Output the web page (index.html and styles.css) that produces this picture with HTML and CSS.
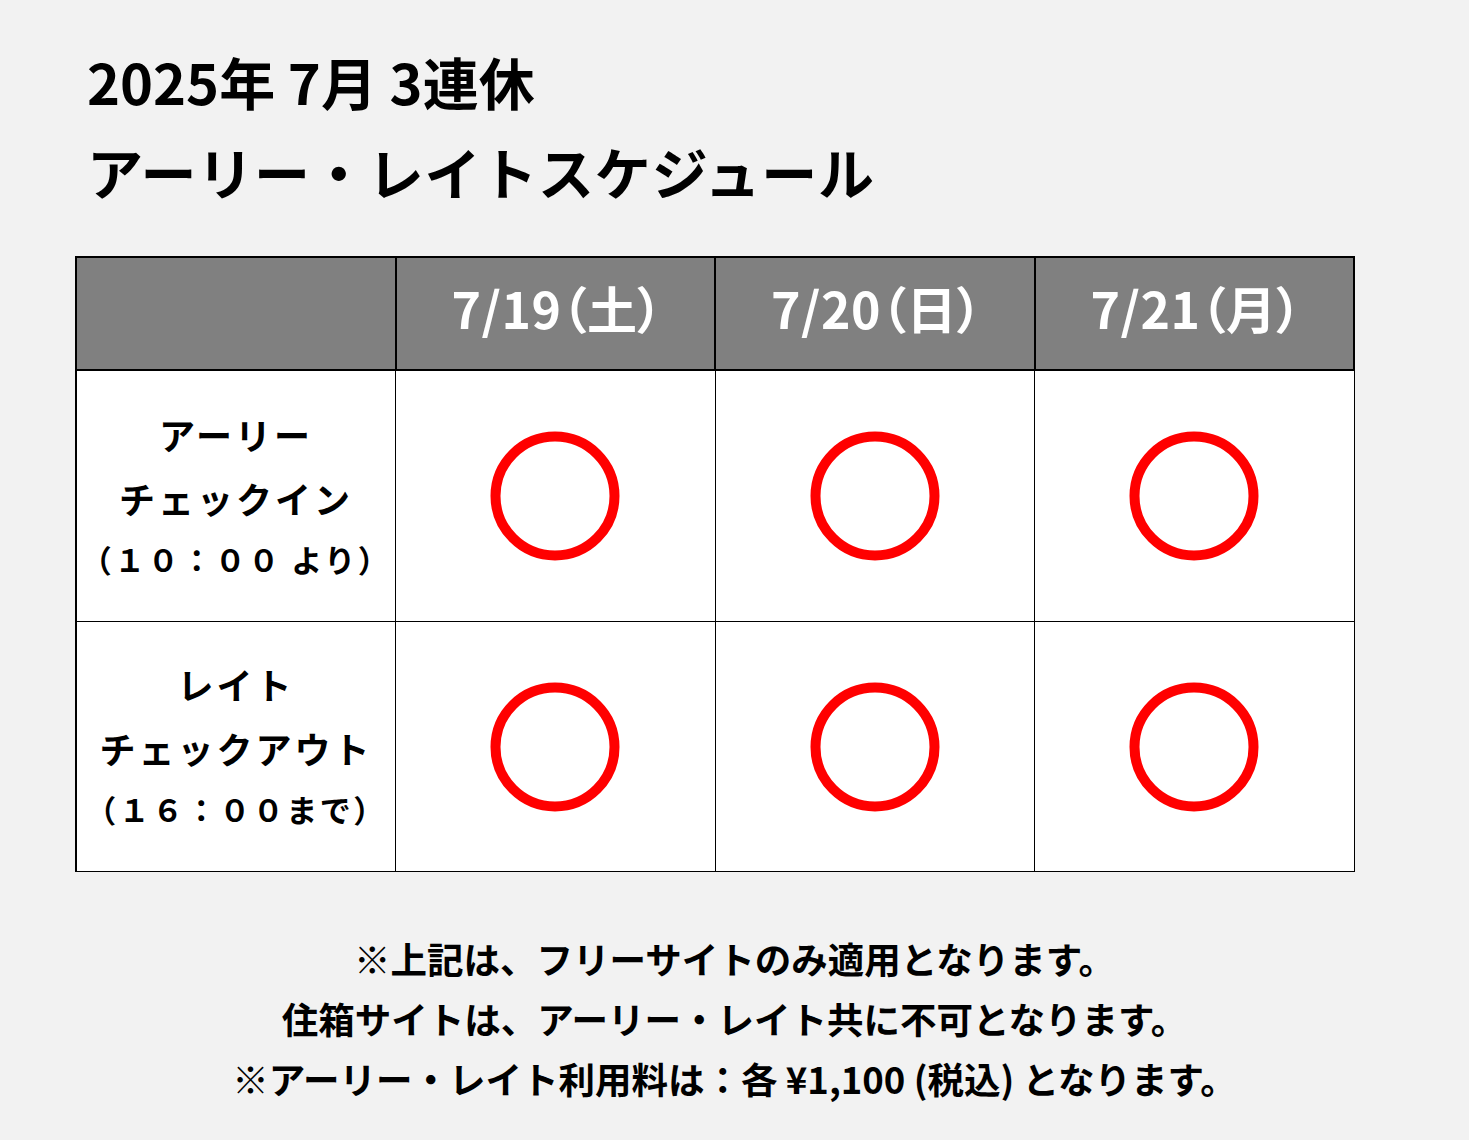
FILE: index.html
```html
<!DOCTYPE html>
<html lang="ja">
<head>
<meta charset="utf-8">
<title>2025年 7月 3連休 アーリー・レイトスケジュール</title>
<link rel="stylesheet" href="styles.css">
</head>
<body>
<div class="page">
  <h1 class="title">
    <span class="title-line1">2025年 7月 3連休</span>
    <span class="title-line2">アーリー・レイトスケジュール</span>
  </h1>

  <table class="schedule">
    <thead>
      <tr>
        <th class="corner"></th>
        <th class="date">7/19（土）</th>
        <th class="date">7/20（日）</th>
        <th class="date">7/21（月）</th>
      </tr>
    </thead>
    <tbody>
      <tr>
        <th class="label">
          <span class="lbl-main">アーリー</span>
          <span class="lbl-main">チェックイン</span>
          <span class="lbl-sub">（１０：００ より）</span>
        </th>
        <td class="mark"><svg class="circle" viewBox="0 0 130 130"><circle cx="65" cy="65" r="59.5"/></svg></td>
        <td class="mark"><svg class="circle" viewBox="0 0 130 130"><circle cx="65" cy="65" r="59.5"/></svg></td>
        <td class="mark"><svg class="circle" viewBox="0 0 130 130"><circle cx="65" cy="65" r="59.5"/></svg></td>
      </tr>
      <tr>
        <th class="label">
          <span class="lbl-main">レイト</span>
          <span class="lbl-main">チェックアウト</span>
          <span class="lbl-sub">（１６：００まで）</span>
        </th>
        <td class="mark"><svg class="circle" viewBox="0 0 130 130"><circle cx="65" cy="65" r="59.5"/></svg></td>
        <td class="mark"><svg class="circle" viewBox="0 0 130 130"><circle cx="65" cy="65" r="59.5"/></svg></td>
        <td class="mark"><svg class="circle" viewBox="0 0 130 130"><circle cx="65" cy="65" r="59.5"/></svg></td>
      </tr>
    </tbody>
  </table>

  <div class="notes">
    <p>※上記は、フリーサイトのみ適用となります。</p>
    <p>住箱サイトは、アーリー・レイト共に不可となります。</p>
    <p>※アーリー・レイト利用料は：各 ¥1,100 (税込) となります。</p>
  </div>
</div>
</body>
</html>
```

FILE: styles.css
```css
html, body {
  margin: 0;
  padding: 0;
  background: #f2f2f2;
}

body {
  font-family: "Noto Sans CJK JP", "Noto Sans", sans-serif;
  color: #000;
  width: 1469px;
  height: 1140px;
  overflow: hidden;
}

.page {
  padding-top: 36px;
}

.title {
  margin: 0 0 40px 87px;
  font-weight: 700;
  line-height: 90px;
}

.title-line1 {
  display: block;
  font-size: 56px;
}

.title-line2 {
  display: block;
  font-size: 56px;
  letter-spacing: 0.8px;
}

.schedule {
  margin-left: 75px;
  border-collapse: collapse;
  table-layout: fixed;
  width: 1280px;
}

.schedule th,
.schedule td {
  padding: 0;
  border: 1px solid #000;
  text-align: center;
  vertical-align: middle;
}

.schedule thead th {
  height: 97px;
  padding-bottom: 14px;
  background: #808080;
  border-width: 2px;
  color: #fff;
  font-size: 50px;
  font-weight: 700;
  font-feature-settings: "palt";
  line-height: 60px;
}

.schedule thead .date {
  padding-left: 4px;
  letter-spacing: 0.5px;
}

.schedule tr > :first-child {
  border-left-width: 2px;
}

.schedule tbody tr:first-child > * {
  height: 250px;
}

.schedule tbody tr:last-child > * {
  height: 249px;
}

.label {
  background: #fff;
  font-weight: 700;
  line-height: 64px;
}

.lbl-main {
  display: block;
  font-size: 36px;
  letter-spacing: 3px;
}

.lbl-sub {
  display: block;
  font-size: 31px;
  font-weight: 700;
  letter-spacing: 2.5px;
  margin-top: -3px;
}

.mark {
  background: #fff;
}

.circle {
  display: block;
  width: 130px;
  height: 130px;
  margin: 0 auto;
}

.circle circle {
  fill: none;
  stroke: #ff0000;
  stroke-width: 10px;
}

.notes {
  margin-top: 57px;
  text-align: center;
  font-weight: 700;
  font-size: 36.5px;
  line-height: 60px;
}

.notes p {
  margin: 0;
}
```
